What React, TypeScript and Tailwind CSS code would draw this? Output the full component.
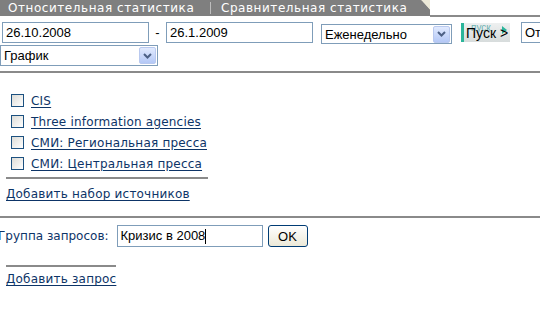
import React from 'react';

const verdana = { fontFamily: '"DejaVu Sans", Verdana, sans-serif' };
const tahoma = { fontFamily: '"Liberation Sans", Tahoma, Arial, sans-serif' };

const Arrow: React.FC = () => (
  <div className="w-[17px] h-[17px] rounded-[2px] border border-[#b9c9ef] bg-gradient-to-b from-[#e1eafe] to-[#b4c8f6] flex items-center justify-center shrink-0">
    <svg width="9" height="6" viewBox="0 0 9 6">
      <path d="M1 1 L4.5 4.5 L8 1" stroke="#4d6185" strokeWidth="2" fill="none" />
    </svg>
  </div>
);

const Select: React.FC<{ value: string; className: string }> = ({ value, className }) => (
  <div className={`flex items-center justify-between border border-[#7f9db9] bg-white pl-[3px] pr-[1px] text-[13px] text-black shrink-0 ${className}`} style={tahoma}>
    <span className="leading-none">{value}</span>
    <Arrow />
  </div>
);

const Checkbox: React.FC = () => (
  <div className="w-[13px] h-[13px] border border-[#1c5180] bg-gradient-to-br from-[#dcdcd7] to-white shrink-0" />
);

const sources = ['CIS', 'Three information agencies', 'СМИ: Региональная пресса', 'СМИ: Центральная пресса'];

export default function App() {
  return (
    <div className="w-[540px] h-[320px] overflow-hidden bg-white relative">
      {/* Tabs */}
      <div className="flex h-[17px]">
        <div className="flex w-[430px] shrink-0 h-[16px] bg-[#7f7f7f] text-white text-[12px] tracking-[0.55px] relative" style={verdana}>
          <div className="w-[211px] pl-[8px] border-r border-[#bdbdbd] my-[2px] leading-[12px]">Относительная статистика</div>
          <div className="pl-[10px] my-[2px] leading-[12px]">Сравнительная статистика</div>
          <svg className="absolute right-0 top-0" width="9" height="16" viewBox="0 0 9 16">
            <polygon points="0,0 9,0 9,10" fill="#ece9d8" />
            <polygon points="0,0 9,10 9,16 6,16" fill="#7f7f7f" />
          </svg>
        </div>
        <div className="flex-1 border-b-2 border-[#8a8a8a] h-[17px]" />
      </div>

      {/* Date row */}
      <div className="flex items-start mt-[5px] text-[13px]" style={tahoma}>
        <div className="ml-[2px] w-[147px] shrink-0 h-[21px] border border-[#7f9db9] pl-[3px] flex items-center">26.10.2008</div>
        <div className="w-[17px] shrink-0 text-center leading-[21px]">-</div>
        <div className="w-[147px] shrink-0 h-[21px] border border-[#7f9db9] pl-[3px] flex items-center">26.1.2009</div>
        <Select value="Еженедельно" className="ml-[8px] mt-[2px] w-[131px] h-[20px]" />
        <div className="ml-[9px] mt-[1px] w-[49px] h-[19px] shrink-0 relative bg-gradient-to-b from-[#eef0f0] to-[#d7dcdc] border-l-[3px] border-[#2bb59a]">
          <span className="absolute left-[7px] top-0 text-[#6fb4b4] text-[10px] leading-[10px]">пуск</span>
          <span className="absolute right-[3px] top-[3px] w-0 h-0 border-y-[4px] border-y-transparent border-l-[5px] border-l-[#2bb59a]" />
          <span className="absolute left-[2px] top-[1px] text-black text-[14px] leading-[18px] whitespace-nowrap">Пуск &gt;</span>
        </div>
        <div className="ml-[11px] w-[40px] shrink-0 h-[21px] border border-[#7f9db9] border-r-0 pl-[3px] flex items-center">От</div>
      </div>

      <Select value="График" className="mt-[1px] w-[158px] h-[21px]" />

      <div className="mt-[5px] border-t-2 border-[#8a8a8a]" />

      {/* Sources */}
      <div className="pt-[17px] text-[12px]" style={verdana}>
        {sources.map((s) => (
          <div key={s} className="flex items-center h-[21px] pl-[11px]">
            <Checkbox />
            <a href="#" className="ml-[7px] text-[#0d3467] underline underline-offset-[2px] tracking-[0.2px]">{s}</a>
          </div>
        ))}
        <div className="ml-[6px] w-[202px] mt-[3px] border-t-2 border-[#8a8a8a]" />
        <a href="#" className="block ml-[6px] mt-[6px] text-[#0d3467] underline underline-offset-[2px] tracking-[0.2px] text-[12px]">Добавить набор источников</a>
      </div>

      <div className="mt-[13px] border-t-2 border-[#8a8a8a]" />

      {/* Query group */}
      <div className="flex items-center mt-[7px]">
        <span className="ml-[-2px] text-[12px] text-[#0d3467]" style={verdana}>Группа запросов:</span>
        <div className="ml-[8px] w-[146px] h-[22px] border border-[#7f9db9] pl-[3px] flex items-center text-[13px]" style={tahoma}>
          Кризис в 2008<span className="inline-block w-[1px] h-[15px] bg-black" />
        </div>
        <button className="ml-[5px] w-[40px] h-[22px] rounded-[3px] border border-[#003c74] bg-gradient-to-b from-white to-[#ece9d8] text-[13px] leading-none text-black" style={tahoma}>OK</button>
      </div>

      <div className="ml-[6px] w-[110px] mt-[18px] border-t-2 border-[#8a8a8a]" />
      <a href="#" className="block ml-[6px] mt-[3px] text-[#0d3467] underline underline-offset-[2px] tracking-[0.2px] text-[12px]" style={verdana}>Добавить запрос</a>
    </div>
  );
}
